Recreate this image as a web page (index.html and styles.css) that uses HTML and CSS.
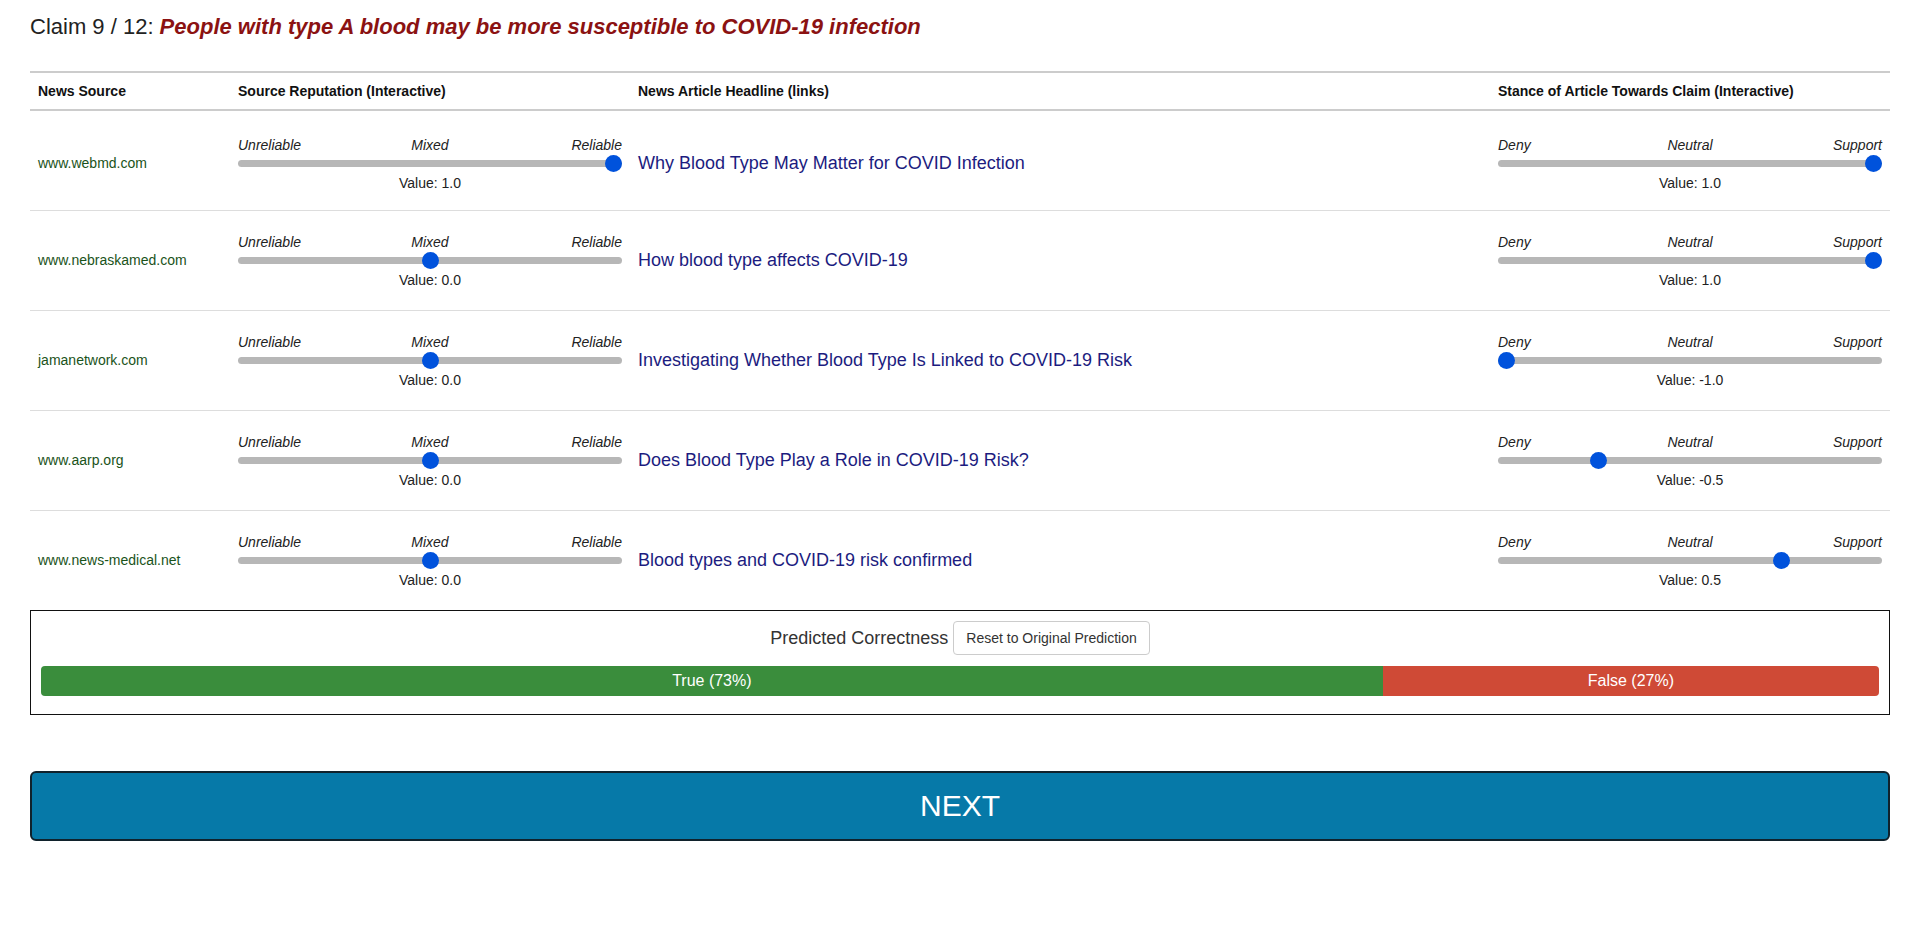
FILE: index.html
```html
<!DOCTYPE html>
<html lang="en">
<head>
<meta charset="utf-8">
<title>Claim 9 / 12</title>
<link rel="stylesheet" href="styles.css">
</head>
<body>
<div class="page">
  <h1 class="claim">Claim 9 / 12: <span class="claim-text">People with type A blood may be more susceptible to COVID-19 infection</span></h1>

  <div class="table">
    <div class="row head">
      <div class="cell">News Source</div>
      <div class="cell">Source Reputation (Interactive)</div>
      <div class="cell">News Article Headline (links)</div>
      <div class="cell">Stance of Article Towards Claim (Interactive)</div>
    </div>

    <div class="row first">
      <div class="cell source">www.webmd.com</div>
      <div class="cell">
        <div class="slider">
          <div class="ticks"><span class="t-l">Unreliable</span><span class="t-c">Mixed</span><span class="t-r">Reliable</span></div>
          <input class="range" type="range" min="-1" max="1" step="0.5" value="1">
          <div class="value">Value: 1.0</div>
        </div>
      </div>
      <div class="cell text-cell"><a class="headline" href="#">Why Blood Type May Matter for COVID Infection</a></div>
      <div class="cell">
        <div class="slider">
          <div class="ticks"><span class="t-l">Deny</span><span class="t-c">Neutral</span><span class="t-r">Support</span></div>
          <input class="range" type="range" min="-1" max="1" step="0.5" value="1">
          <div class="value">Value: 1.0</div>
        </div>
      </div>
    </div>

    <div class="row">
      <div class="cell source">www.nebraskamed.com</div>
      <div class="cell">
        <div class="slider">
          <div class="ticks"><span class="t-l">Unreliable</span><span class="t-c">Mixed</span><span class="t-r">Reliable</span></div>
          <input class="range" type="range" min="-1" max="1" step="0.5" value="0">
          <div class="value">Value: 0.0</div>
        </div>
      </div>
      <div class="cell text-cell"><a class="headline" href="#">How blood type affects COVID-19</a></div>
      <div class="cell">
        <div class="slider">
          <div class="ticks"><span class="t-l">Deny</span><span class="t-c">Neutral</span><span class="t-r">Support</span></div>
          <input class="range" type="range" min="-1" max="1" step="0.5" value="1">
          <div class="value">Value: 1.0</div>
        </div>
      </div>
    </div>

    <div class="row">
      <div class="cell source">jamanetwork.com</div>
      <div class="cell">
        <div class="slider">
          <div class="ticks"><span class="t-l">Unreliable</span><span class="t-c">Mixed</span><span class="t-r">Reliable</span></div>
          <input class="range" type="range" min="-1" max="1" step="0.5" value="0">
          <div class="value">Value: 0.0</div>
        </div>
      </div>
      <div class="cell text-cell"><a class="headline" href="#">Investigating Whether Blood Type Is Linked to COVID-19 Risk</a></div>
      <div class="cell">
        <div class="slider">
          <div class="ticks"><span class="t-l">Deny</span><span class="t-c">Neutral</span><span class="t-r">Support</span></div>
          <input class="range" type="range" min="-1" max="1" step="0.5" value="-1">
          <div class="value">Value: -1.0</div>
        </div>
      </div>
    </div>

    <div class="row">
      <div class="cell source">www.aarp.org</div>
      <div class="cell">
        <div class="slider">
          <div class="ticks"><span class="t-l">Unreliable</span><span class="t-c">Mixed</span><span class="t-r">Reliable</span></div>
          <input class="range" type="range" min="-1" max="1" step="0.5" value="0">
          <div class="value">Value: 0.0</div>
        </div>
      </div>
      <div class="cell text-cell"><a class="headline" href="#">Does Blood Type Play a Role in COVID-19 Risk?</a></div>
      <div class="cell">
        <div class="slider">
          <div class="ticks"><span class="t-l">Deny</span><span class="t-c">Neutral</span><span class="t-r">Support</span></div>
          <input class="range" type="range" min="-1" max="1" step="0.5" value="-0.5">
          <div class="value">Value: -0.5</div>
        </div>
      </div>
    </div>

    <div class="row last">
      <div class="cell source">www.news-medical.net</div>
      <div class="cell">
        <div class="slider">
          <div class="ticks"><span class="t-l">Unreliable</span><span class="t-c">Mixed</span><span class="t-r">Reliable</span></div>
          <input class="range" type="range" min="-1" max="1" step="0.5" value="0">
          <div class="value">Value: 0.0</div>
        </div>
      </div>
      <div class="cell text-cell"><a class="headline" href="#">Blood types and COVID-19 risk confirmed</a></div>
      <div class="cell">
        <div class="slider">
          <div class="ticks"><span class="t-l">Deny</span><span class="t-c">Neutral</span><span class="t-r">Support</span></div>
          <input class="range" type="range" min="-1" max="1" step="0.5" value="0.5">
          <div class="value">Value: 0.5</div>
        </div>
      </div>
    </div>
  </div>

  <div class="prediction">
    <div class="pred-head">
      <span class="pred-label">Predicted Correctness</span>
      <button class="btn-reset" type="button">Reset to Original Prediction</button>
    </div>
    <div class="progress">
      <div class="bar bar-true" style="width: 73%">True (73%)</div>
      <div class="bar bar-false" style="width: 27%">False (27%)</div>
    </div>
  </div>

  <button class="btn-next" type="button">NEXT</button>
</div>
</body>
</html>
```

FILE: styles.css
```css
* { box-sizing: border-box; }

html, body {
  margin: 0;
  padding: 0;
  background: #ffffff;
}

body {
  font-family: "Liberation Sans", Arial, Helvetica, sans-serif;
  font-size: 14px;
  line-height: 20px;
  color: #222222;
}

.page {
  padding: 12px 30px 0 30px;
}

.claim {
  margin: 0 0 29px 0;
  font-size: 22px;
  line-height: 30px;
  font-weight: normal;
  color: #222222;
}

.claim-text {
  color: #8b1212;
  font-weight: bold;
  font-style: italic;
}

.table {
  border-top: 2px solid #cccccc;
}

.row {
  display: grid;
  grid-template-columns: 200px 400px 1fr 400px;
  align-items: center;
  height: 100px;
  padding-bottom: 6px;
  border-bottom: 1px solid #dddddd;
}

.row.first {
  padding-bottom: 0;
}

.row.head {
  height: 38px;
  padding-bottom: 0;
  border-bottom: 2px solid #cccccc;
  font-weight: bold;
  color: #111111;
}

.row.last {
  border-bottom: none;
  height: 99px;
}

.cell {
  padding: 0 8px;
}

.source {
  color: #1a531a;
  padding-top: 4px;
}

.text-cell {
  padding-top: 4px;
}

.headline {
  font-size: 18px;
  line-height: 22px;
  color: #1c1c80;
  text-decoration: none;
}

.slider {
  display: flex;
  flex-direction: column;
  padding-top: 7px;
}

.ticks {
  display: grid;
  grid-template-columns: 1fr auto 1fr;
  font-style: italic;
  font-size: 14px;
  line-height: 16px;
  color: #222222;
  margin-bottom: 2px;
}

.t-l { justify-self: start; }
.t-c { justify-self: center; }
.t-r { justify-self: end; }

.range {
  -webkit-appearance: none;
  appearance: none;
  display: block;
  width: 100%;
  height: 17px;
  margin: 0 0 3px 0;
  padding: 0;
  background: transparent;
  outline: none;
}

.range::-webkit-slider-runnable-track {
  height: 7px;
  border-radius: 4px;
  background: #b7b7b7;
}

.range::-webkit-slider-thumb {
  -webkit-appearance: none;
  appearance: none;
  width: 17px;
  height: 17px;
  margin-top: -5px;
  border-radius: 50%;
  border: none;
  background: #0052dc;
}

.value {
  text-align: center;
  font-size: 14px;
  line-height: 16px;
  color: #222222;
}

.prediction {
  border: 1px solid #111111;
  padding: 10px 10px 0 10px;
  height: 105px;
}

.pred-head {
  display: flex;
  justify-content: center;
  align-items: center;
  gap: 5px;
}

.pred-label {
  font-size: 18px;
  color: #333333;
}

.btn-reset {
  font-family: inherit;
  font-size: 14px;
  line-height: 20px;
  padding: 6px 12px;
  color: #333333;
  background: #ffffff;
  border: 1px solid #cccccc;
  border-radius: 4px;
}

.progress {
  display: flex;
  height: 30px;
  margin-top: 11px;
  border-radius: 4px;
  overflow: hidden;
  background: #f5f5f5;
}

.bar {
  display: flex;
  align-items: center;
  justify-content: center;
  color: #ffffff;
  font-size: 16px;
}

.bar-true { background: #3a8d3c; }
.bar-false { background: #cf4a36; }

.btn-next {
  display: block;
  width: 100%;
  height: 70px;
  margin-top: 56px;
  font-family: inherit;
  font-size: 30px;
  color: #ffffff;
  background: #0679a8;
  border: 2px solid #10222c;
  border-radius: 6px;
}
```
